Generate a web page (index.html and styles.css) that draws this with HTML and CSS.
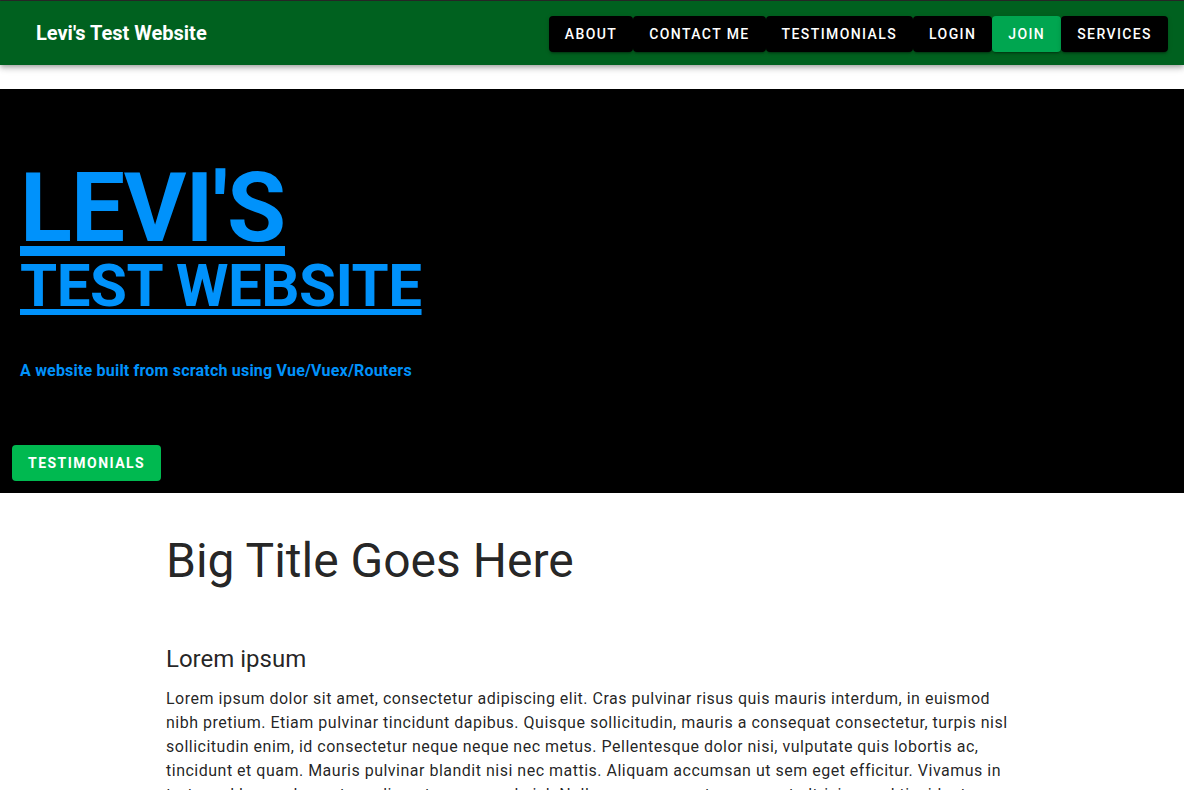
FILE: index.html
```html
<!DOCTYPE html>
<html>
<head>
<meta charset="utf-8">
<link rel="stylesheet" href="styles.css">
</head>
<body>
<div class="app">
  <header class="appbar">
    <div class="brand">Levi's Test Website</div>
    <nav class="nav">
      <a class="btn btn-dark">About</a>
      <a class="btn btn-dark">Contact Me</a>
      <a class="btn btn-dark">Testimonials</a>
      <a class="btn btn-dark">Login</a>
      <a class="btn btn-join">Join</a>
      <a class="btn btn-dark">Services</a>
    </nav>
  </header>
  <main class="main">
    <section class="hero">
      <div class="hero-text">
        <h1 class="hero-title"><span class="big">LEVI'S</span><span class="sub">TEST WEBSITE</span></h1>
        <p class="tagline">A website built from scratch using Vue/Vuex/Routers</p>
      </div>
      <a class="btn btn-hero">Testimonials</a>
    </section>
    <section class="content">
      <h2 class="page-title">Big Title Goes Here</h2>
      <h3 class="section-title">Lorem ipsum</h3>
      <p class="body-text">Lorem ipsum dolor sit amet, consectetur adipiscing elit. Cras pulvinar risus quis mauris interdum, in euismod nibh pretium. Etiam pulvinar tincidunt dapibus. Quisque sollicitudin, mauris a consequat consectetur, turpis nisl sollicitudin enim, id consectetur neque neque nec metus. Pellentesque dolor nisi, vulputate quis lobortis ac, tincidunt et quam. Mauris pulvinar blandit nisi nec mattis. Aliquam accumsan ut sem eget efficitur. Vivamus in tortor vel lacus placerat condimentum non sed nisl. Nulla a neque a erat consequat ultricies, sed tincidunt sapien dolor in tortor. Integer posuere mauris sed finibus ultrices.</p>
    </section>
  </main>
</div>
</body>
</html>
```

FILE: styles.css
```css
* { box-sizing: border-box; }
html, body { margin: 0; padding: 0; }
body {
  font-family: Roboto, "Liberation Sans", Arial, sans-serif;
  background: #fff;
  color: rgba(0,0,0,0.87);
  overflow: hidden;
}
.app {
  border-top: 1px solid #2a2a2a;
  min-height: 790px;
}
.appbar {
  height: 64px;
  background: #00611f;
  display: flex;
  align-items: center;
  justify-content: space-between;
  padding: 0 16px 0 36px;
  box-shadow: 0 2px 4px -1px rgba(0,0,0,.2), 0 4px 5px 0 rgba(0,0,0,.14), 0 1px 10px 0 rgba(0,0,0,.12);
  position: relative;
  z-index: 2;
}
.brand {
  color: #fff;
  font-size: 20px;
  font-weight: 700;
  letter-spacing: 0;
}
.nav {
  display: flex;
  align-items: center;
  padding-top: 1px;
}
.btn {
  display: inline-flex;
  align-items: center;
  justify-content: center;
  height: 36px;
  padding: 0 16px;
  border-radius: 4px;
  color: #fff;
  font-size: 14px;
  font-weight: 500;
  letter-spacing: 1.4px;
  text-transform: uppercase;
  text-decoration: none;
  box-shadow: 0 3px 1px -2px rgba(0,0,0,.2), 0 2px 2px 0 rgba(0,0,0,.14), 0 1px 5px 0 rgba(0,0,0,.12);
}
.btn-dark { background: #000; }
.btn-join { background: #00a650; }
.main { padding-top: 24px; }
.hero {
  background: #000;
  height: 404px;
  padding: 71px 12px 12px 12px;
  display: flex;
  flex-direction: column;
  justify-content: space-between;
  align-items: flex-start;
}
.hero-text { padding-left: 8px; }
.hero-title {
  margin: 0;
  color: #0092fb;
  font-weight: 700;
}
.hero-title span {
  display: block;
  text-decoration: underline;
  text-decoration-thickness: 0.1em;
  width: max-content;
}
.big {
  font-size: 96px;
  line-height: 96px;
  letter-spacing: -0.011em;
}
.sub {
  font-size: 60px;
  line-height: 60px;
  letter-spacing: -0.0083em;
}
.tagline {
  margin: 43px 0 0 0;
  color: #0092fb;
  font-size: 16px;
  font-weight: 700;
  line-height: 24px;
  letter-spacing: 0.2px;
}
.btn-hero {
  background: #00b950;
  font-weight: 700;
  letter-spacing: 0.105em;
}
.content {
  width: 852px;
  margin: 0 auto;
  padding-top: 38px;
}
.page-title {
  margin: 0;
  font-size: 48px;
  font-weight: 400;
  line-height: 60px;
  color: rgba(0,0,0,0.87);
}
.section-title {
  margin: 52px 0 0 0;
  font-size: 24px;
  font-weight: 400;
  line-height: 32px;
  color: rgba(0,0,0,0.87);
}
.body-text {
  margin: 12px 0 0 0;
  font-size: 16px;
  line-height: 24px;
  letter-spacing: 0.03125em;
  color: rgba(0,0,0,0.87);
}
```
